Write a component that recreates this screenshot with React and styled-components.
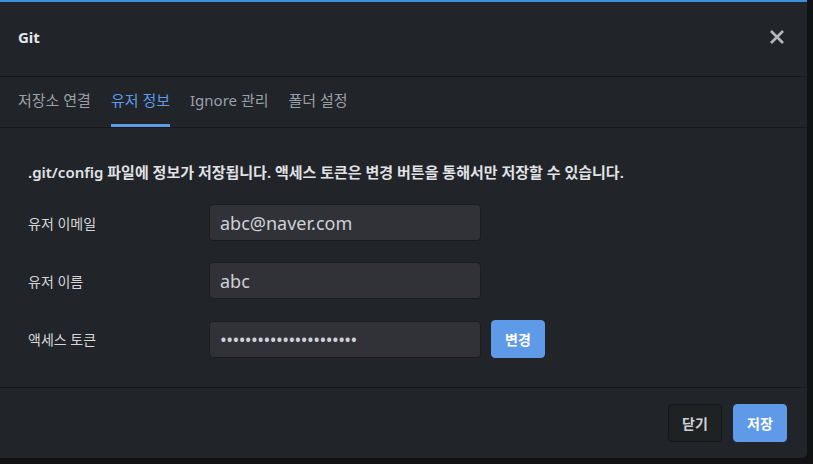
import { useState } from 'react';
import styled, { createGlobalStyle } from 'styled-components';

const GlobalStyle = createGlobalStyle`
  html, body {
    margin: 0;
    padding: 0;
    background: #111213;
  }
  body {
    font-family: 'Noto Sans', 'Noto Sans CJK KR', sans-serif;
  }
`;

const Page = styled.div`
  width: 813px;
  height: 464px;
  background: #111213;
`;

const Dialog = styled.div`
  width: 807px;
  height: 458px;
  box-sizing: border-box;
  background: #212428;
  border-top: 2px solid #3d8fe0;
  border-radius: 0 0 5px 0;
  display: flex;
  flex-direction: column;
  color: #d4d6da;
`;

const Header = styled.div`
  height: 75px;
  display: flex;
  align-items: center;
  justify-content: space-between;
  padding: 0 21px 5px 18px;
  box-sizing: border-box;
  border-bottom: 1px solid #16181b;
`;

const Title = styled.h1`
  margin: 0;
  font-size: 15px;
  font-weight: 700;
  color: #e4e6ea;
`;

const CloseButton = styled.button`
  border: none;
  background: none;
  padding: 0;
  width: 18px;
  height: 18px;
  display: flex;
  align-items: center;
  justify-content: center;
  cursor: pointer;
`;

const Tabs = styled.div`
  height: 50px;
  display: flex;
  gap: 20px;
  padding: 0 18px;
  border-bottom: 1px solid #16181b;
`;

const Tab = styled.button`
  border: none;
  background: none;
  padding: 0;
  font-family: inherit;
  font-size: 15px;
  color: ${(p) => (p.$active ? '#5d9be8' : '#9ba0a8')};
  border-bottom: 3px solid ${(p) => (p.$active ? '#5d9be8' : 'transparent')};
  padding-bottom: 2px;
  cursor: pointer;
`;

const Body = styled.div`
  flex: 1;
  padding: 33px 28px 0;
  border-bottom: 1px solid #16181b;
`;

const Notice = styled.p`
  margin: 0 0 22px;
  font-size: 15px;
  font-weight: 600;
  color: #e0e2e6;
`;

const Form = styled.div`
  display: flex;
  flex-direction: column;
  gap: 21px;
`;

const Row = styled.div`
  display: flex;
  align-items: center;
  gap: 10px;
`;

const Label = styled.label`
  width: 171px;
  font-size: 14px;
  color: #d4d6da;
`;

const Input = styled.input`
  width: 272px;
  height: 37px;
  box-sizing: border-box;
  padding: 0 10px;
  background: #313238;
  border: 1px solid #1a1c1f;
  border-radius: 4px;
  color: #cfd1d6;
  font-family: inherit;
  font-size: 18px;
  letter-spacing: ${(p) => (p.type === 'password' ? '-0.55px' : 'normal')};
  outline: none;
`;

const Button = styled.button`
  width: 54px;
  height: 38px;
  box-sizing: border-box;
  border-radius: 4px;
  font-family: inherit;
  font-size: 14px;
  font-weight: 700;
  cursor: pointer;
  border: 1px solid ${(p) => (p.$primary ? '#5f9ae8' : '#16181b')};
  background: ${(p) => (p.$primary ? '#5f9ae8' : '#1f2225')};
  color: ${(p) => (p.$primary ? '#ffffff' : '#d0d2d6')};
`;

const Footer = styled.div`
  height: 70px;
  display: flex;
  align-items: center;
  justify-content: flex-end;
  gap: 11px;
  padding: 0 20px;
`;

const tabs = ['저장소 연결', '유저 정보', 'Ignore 관리', '폴더 설정'];

function App() {
  const [active, setActive] = useState(1);

  return (
    <Page>
      <GlobalStyle />
      <Dialog>
        <Header>
          <Title>Git</Title>
          <CloseButton aria-label="close">
            <svg width="16" height="16" viewBox="0 0 16 16">
              <path d="M2 2 L14 14 M14 2 L2 14" stroke="#b4b7bc" strokeWidth="2.6" strokeLinecap="butt" />
            </svg>
          </CloseButton>
        </Header>
        <Tabs>
          {tabs.map((t, i) => (
            <Tab key={t} $active={i === active} onClick={() => setActive(i)}>
              {t}
            </Tab>
          ))}
        </Tabs>
        <Body>
          <Notice>.git/config 파일에 정보가 저장됩니다. 액세스 토큰은 변경 버튼을 통해서만 저장할 수 있습니다.</Notice>
          <Form>
            <Row>
              <Label>유저 이메일</Label>
              <Input defaultValue="abc@naver.com" />
            </Row>
            <Row>
              <Label>유저 이름</Label>
              <Input defaultValue="abc" />
            </Row>
            <Row>
              <Label>액세스 토큰</Label>
              <Input type="password" defaultValue="abcdefghijklmnopqrstuv" />
              <Button $primary>변경</Button>
            </Row>
          </Form>
        </Body>
        <Footer>
          <Button>닫기</Button>
          <Button $primary>저장</Button>
        </Footer>
      </Dialog>
    </Page>
  );
}

export default App;
